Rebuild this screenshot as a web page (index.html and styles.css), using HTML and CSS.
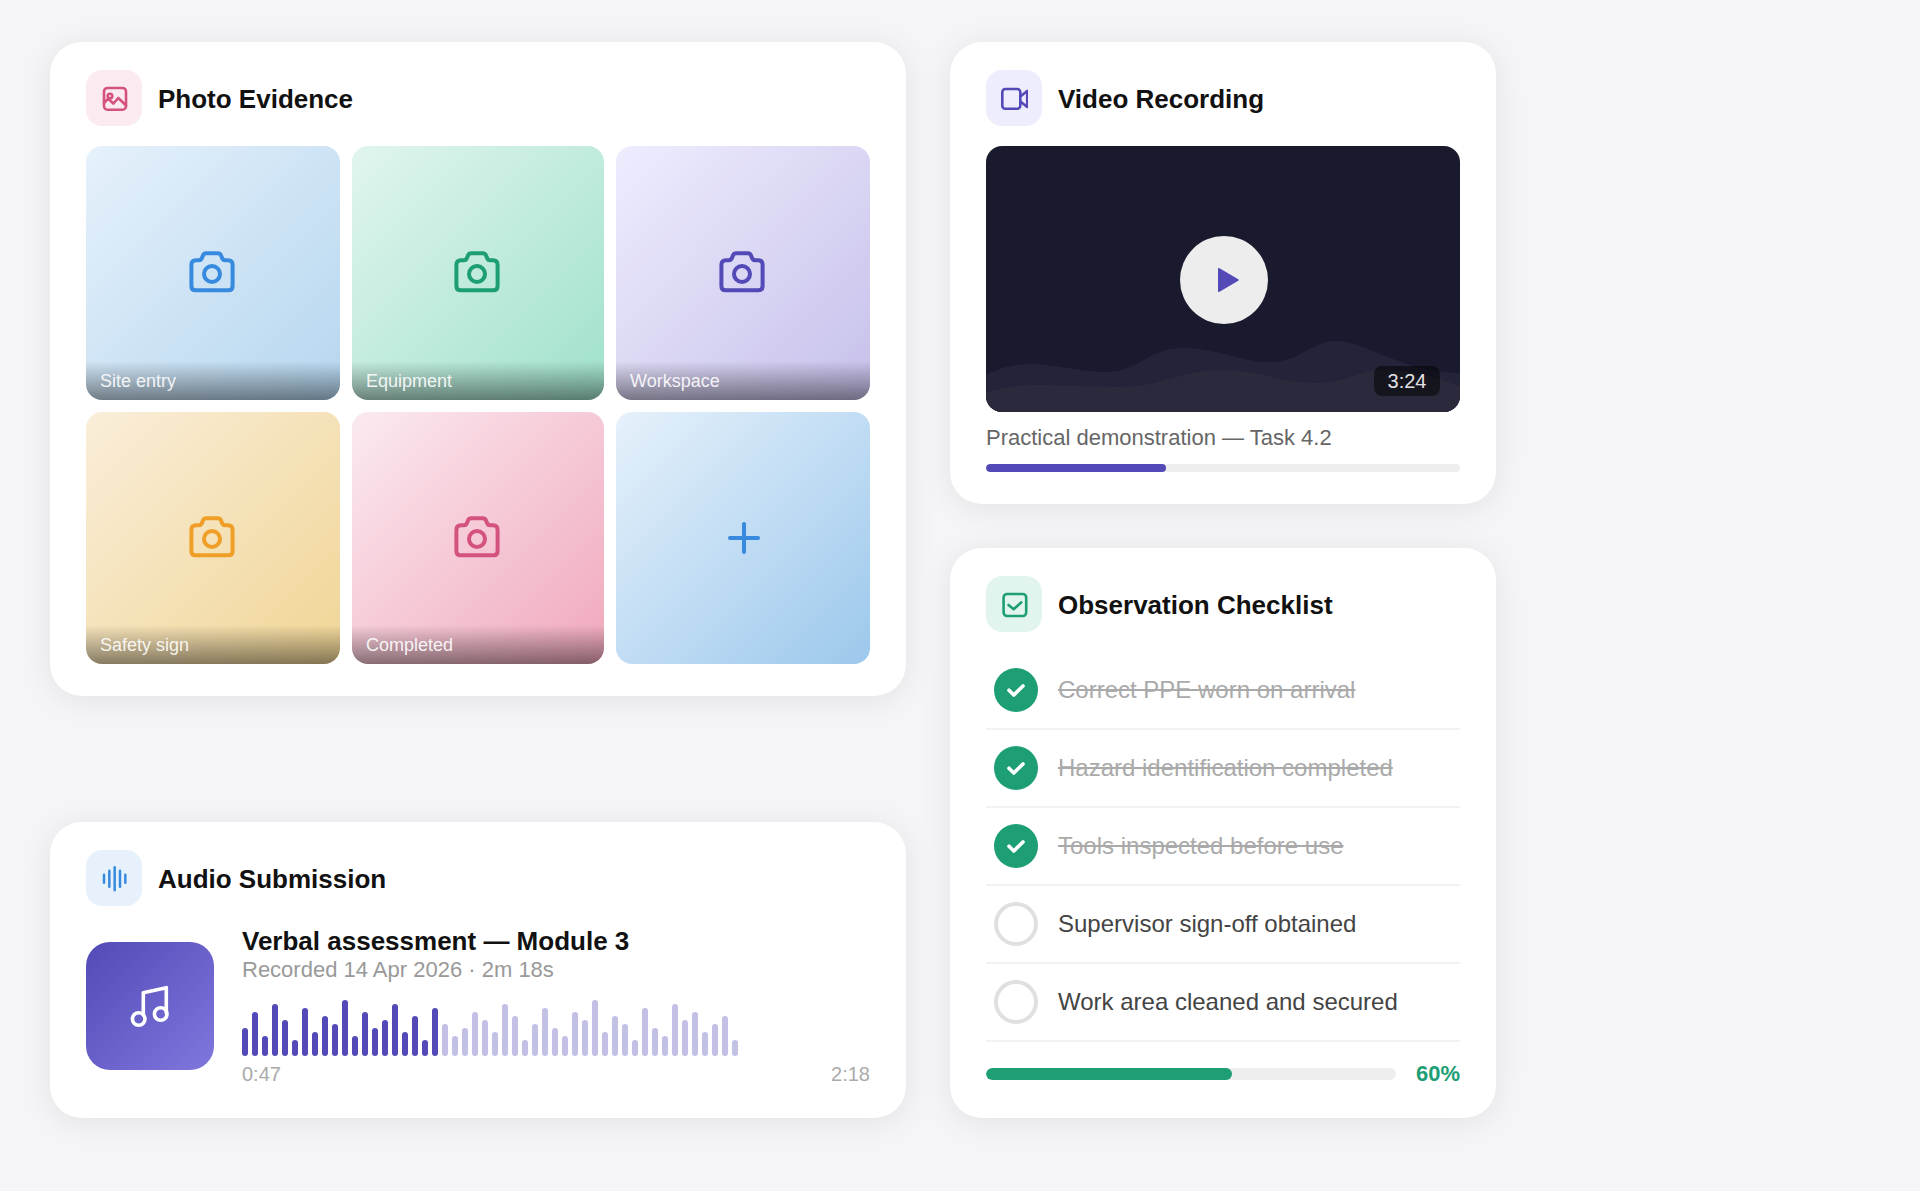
FILE: index.html
```html
<!doctype html>
<html>
<head>
  <title>Evidence</title>
  <link rel="stylesheet" href="styles.css">
</head>
<body>
<div class="board">

	<div class="col col-left">
		<section class="card">
			<div class="card-head">
				<div class="head-icon pink">
					<svg width="28" height="28" viewBox="0 0 28 28" fill="none" stroke="#D4537E" stroke-width="2.600" stroke-linecap="round" stroke-linejoin="round"><rect x="4" y="4" width="22" height="21.700" rx="3.500"/><circle cx="10" cy="12" r="2.300"/><path d="M4 19l4.300-4.500 5 5.100 5-5.600 7.700 7.500"/></svg>
				</div>
				<h2>Photo Evidence</h2>
			</div>
			<div class="photo-grid">
				<div class="tile tile-blue">
					<svg class="cam" viewBox="0 0 24 24" stroke="#378ADD"><path d="M1.200 8Q1.200 5.650 3.500 5.650H5Q5.900 5.650 6.300 4.900L7 3.200Q7.500 2.150 8.600 2.150H14.400Q15.500 2.150 16 3.200L16.700 4.900Q17.100 5.650 18 5.650H19.500Q21.800 5.650 21.800 8V18.500Q21.800 20.650 19.700 20.650H3.300Q1.200 20.650 1.200 18.500Z"/><circle cx="11.500" cy="12.500" r="4"/></svg>
					<div class="tile-label">Site entry</div>
				</div>
				<div class="tile tile-green">
					<svg class="cam" viewBox="0 0 24 24" stroke="#1D9E75"><path d="M1.200 8Q1.200 5.650 3.500 5.650H5Q5.900 5.650 6.300 4.900L7 3.200Q7.500 2.150 8.600 2.150H14.400Q15.500 2.150 16 3.200L16.700 4.900Q17.100 5.650 18 5.650H19.500Q21.800 5.650 21.800 8V18.500Q21.800 20.650 19.700 20.650H3.300Q1.200 20.650 1.200 18.500Z"/><circle cx="11.500" cy="12.500" r="4"/></svg>
					<div class="tile-label">Equipment</div>
				</div>
				<div class="tile tile-purple">
					<svg class="cam" viewBox="0 0 24 24" stroke="#534AB7"><path d="M1.200 8Q1.200 5.650 3.500 5.650H5Q5.900 5.650 6.300 4.900L7 3.200Q7.500 2.150 8.600 2.150H14.400Q15.500 2.150 16 3.200L16.700 4.900Q17.100 5.650 18 5.650H19.500Q21.800 5.650 21.800 8V18.500Q21.800 20.650 19.700 20.650H3.300Q1.200 20.650 1.200 18.500Z"/><circle cx="11.500" cy="12.500" r="4"/></svg>
					<div class="tile-label">Workspace</div>
				</div>
				<div class="tile tile-amber">
					<svg class="cam" viewBox="0 0 24 24" stroke="#EF9F27"><path d="M1.200 8Q1.200 5.650 3.500 5.650H5Q5.900 5.650 6.300 4.900L7 3.200Q7.500 2.150 8.600 2.150H14.400Q15.500 2.150 16 3.200L16.700 4.900Q17.100 5.650 18 5.650H19.500Q21.800 5.650 21.800 8V18.500Q21.800 20.650 19.700 20.650H3.300Q1.200 20.650 1.200 18.500Z"/><circle cx="11.500" cy="12.500" r="4"/></svg>
					<div class="tile-label">Safety sign</div>
				</div>
				<div class="tile tile-pink">
					<svg class="cam" viewBox="0 0 24 24" stroke="#D4537E"><path d="M1.200 8Q1.200 5.650 3.500 5.650H5Q5.900 5.650 6.300 4.900L7 3.200Q7.500 2.150 8.600 2.150H14.400Q15.500 2.150 16 3.200L16.700 4.900Q17.100 5.650 18 5.650H19.500Q21.800 5.650 21.800 8V18.500Q21.800 20.650 19.700 20.650H3.300Q1.200 20.650 1.200 18.500Z"/><circle cx="11.500" cy="12.500" r="4"/></svg>
					<div class="tile-label">Completed</div>
				</div>
				<div class="tile tile-add">
					<svg class="cam" viewBox="0 0 24 24" stroke="#378ADD"><path d="M12.500 5v14M5.500 12h14"/></svg>
				</div>
			</div>
		</section>

		<section class="card">
			<div class="card-head">
				<div class="head-icon blue">
					<svg width="28" height="28" viewBox="0 0 28 28" fill="none" stroke="#378ADD" stroke-width="2.500" stroke-linecap="round"><path d="M4 10.700v8M9.330 6.700v16M14.670 3.200v23M20 6.700v16M25.330 10.700v8"/></svg>
				</div>
				<h2>Audio Submission</h2>
			</div>
			<div class="audio-body">
				<div class="audio-art">
					<svg width="48" height="48" viewBox="0 0 48 48" fill="none" stroke="#fff" stroke-width="3.600" stroke-linecap="round" stroke-linejoin="round"><path d="M17.300 33V10.700L40.300 5.700V31"/><circle cx="12.700" cy="37" r="6.300"/><circle cx="34.700" cy="32" r="6.300"/></svg>
				</div>
				<div class="audio-info">
					<div class="audio-title">Verbal assessment — Module 3</div>
					<div class="audio-sub">Recorded 14 Apr 2026 · 2m 18s</div>
					<div class="wave">
						<span class="on" style="height:28px"></span><span class="on" style="height:44px"></span><span class="on" style="height:20px"></span><span class="on" style="height:52px"></span><span class="on" style="height:36px"></span>
						<span class="on" style="height:16px"></span><span class="on" style="height:48px"></span><span class="on" style="height:24px"></span><span class="on" style="height:40px"></span><span class="on" style="height:32px"></span>
						<span class="on" style="height:56px"></span><span class="on" style="height:20px"></span><span class="on" style="height:44px"></span><span class="on" style="height:28px"></span><span class="on" style="height:36px"></span>
						<span class="on" style="height:52px"></span><span class="on" style="height:24px"></span><span class="on" style="height:40px"></span><span class="on" style="height:16px"></span><span class="on" style="height:48px"></span>
						<span style="height:32px"></span><span style="height:20px"></span><span style="height:28px"></span><span style="height:44px"></span><span style="height:36px"></span>
						<span style="height:24px"></span><span style="height:52px"></span><span style="height:40px"></span><span style="height:16px"></span><span style="height:32px"></span>
						<span style="height:48px"></span><span style="height:28px"></span><span style="height:20px"></span><span style="height:44px"></span><span style="height:36px"></span>
						<span style="height:56px"></span><span style="height:24px"></span><span style="height:40px"></span><span style="height:32px"></span><span style="height:16px"></span>
						<span style="height:48px"></span><span style="height:28px"></span><span style="height:20px"></span><span style="height:52px"></span><span style="height:36px"></span>
						<span style="height:44px"></span><span style="height:24px"></span><span style="height:32px"></span><span style="height:40px"></span><span style="height:16px"></span>
					</div>
					<div class="audio-times"><span>0:47</span><span>2:18</span></div>
				</div>
			</div>
		</section>
	</div>

	<div class="col col-right">
		<section class="card">
			<div class="card-head">
				<div class="head-icon purple">
					<svg width="28" height="28" viewBox="0 0 28 28" fill="none" stroke="#534AB7" stroke-width="2.600" stroke-linecap="round" stroke-linejoin="round"><rect x="2.300" y="5" width="18" height="19.700" rx="3"/><path d="M21 12l6.200-5V23L21 18"/></svg>
				</div>
				<h2>Video Recording</h2>
			</div>
			<div class="video">
				<svg class="video-waves" viewBox="0 0 474 266" preserveAspectRatio="none">
					<path fill="#23233A" d="M0 229C15 221 30 218 43 218C70 218 95 226 119 226C155 226 160 202 198 202C230 202 255 216 284 216C315 216 325 195 350 195C380 195 415 226 474 227V266H0Z"/>
					<path fill="#2A2A3C" d="M0 247C15 242 30 239 50 239C85 239 105 241 136 241C175 241 195 224 236 224C275 224 295 237 329 237C360 237 375 224 394 224C425 224 450 230 474 241V266H0Z"/>
				</svg>
				<div class="play">
					<svg width="24" height="28" viewBox="0 0 24 28"><path fill="#534AB7" d="M2 3c0-.8.9-1.300 1.500-.8l18.800 11c.6.400.6 1.200 0 1.600L3.500 25.800c-.6.500-1.500 0-1.500-.8z"/></svg>
				</div>
				<div class="duration">3:24</div>
			</div>
			<div class="video-caption">Practical demonstration — Task 4.2</div>
			<div class="bar bar-thin"><div class="bar-fill fill-purple" style="width:38%"></div></div>
		</section>

		<section class="card">
			<div class="card-head">
				<div class="head-icon green">
					<svg width="28" height="28" viewBox="0 0 28 28" fill="none" stroke="#1D9E75" stroke-width="2.600" stroke-linecap="round" stroke-linejoin="round"><rect x="3.600" y="4" width="22.600" height="22" rx="3.500"/><path d="M8.500 15l5.200 4.300 7.600-7"/></svg>
				</div>
				<h2>Observation Checklist</h2>
			</div>
			<div class="check-list">
				<div class="check-row done">
					<div class="check-dot"><svg width="24" height="24" viewBox="0 0 24 24"><path d="M5 12.200l4.800 4.800L19 8"/></svg></div>
					<div class="check-text">Correct PPE worn on arrival</div>
				</div>
				<div class="check-row done">
					<div class="check-dot"><svg width="24" height="24" viewBox="0 0 24 24"><path d="M5 12.200l4.800 4.800L19 8"/></svg></div>
					<div class="check-text">Hazard identification completed</div>
				</div>
				<div class="check-row done">
					<div class="check-dot"><svg width="24" height="24" viewBox="0 0 24 24"><path d="M5 12.200l4.800 4.800L19 8"/></svg></div>
					<div class="check-text">Tools inspected before use</div>
				</div>
				<div class="check-row">
					<div class="check-dot"></div>
					<div class="check-text">Supervisor sign-off obtained</div>
				</div>
				<div class="check-row">
					<div class="check-dot"></div>
					<div class="check-text">Work area cleaned and secured</div>
				</div>
			</div>
			<div class="check-foot">
				<div class="bar bar-thick"><div class="bar-fill fill-green" style="width:60%"></div></div>
				<div class="check-pct">60%</div>
			</div>
		</section>
	</div>

</div>
</body>
</html>
```

FILE: styles.css
```css
html, body {height: 100%}
body {
	margin: 0;
	padding: 0;
	background: #f5f5f7;
	font-family: "Liberation Sans", Arial, sans-serif;
	color: #111;
}

.board {
	display: flex;
	gap: 44px;
	padding: 42px 50px;
	box-sizing: border-box;
	width: 1920px;
}
.col {
	display: flex;
	flex-direction: column;
}
.col-left {
	width: 856px;
	justify-content: space-between;
}
.col-right {
	width: 546px;
	gap: 44px;
}

.card {
	background: #fff;
	border-radius: 32px;
	padding: 28px 36px 32px;
	box-shadow: 0 4px 32px rgba(0, 0, 0, 0.08);
}
.card-head {
	display: flex;
	align-items: center;
	gap: 16px;
	margin-bottom: 20px;
}
.card-head h2 {
	margin: 0;
	padding-top: 2px;
	font-size: 26px;
	line-height: 32px;
	font-weight: 700;
}
.head-icon {
	width: 56px;
	height: 56px;
	border-radius: 16px;
	display: flex;
	align-items: center;
	justify-content: center;
}
.pink {background: #FBEAF0}
.blue {background: #E6F1FB}
.purple {background: #EEEDFE}
.green {background: #E1F5EE}

/* photos */
.photo-grid {
	display: grid;
	grid-template-columns: 254px 252px 254px;
	grid-template-rows: 254px 252px;
	gap: 12px;
}
.tile {
	position: relative;
	border-radius: 16px;
	overflow: hidden;
	display: flex;
	align-items: center;
	justify-content: center;
}
.tile-blue {background: linear-gradient(135deg, #E6F1FB, #B5D6EF)}
.tile-green {background: linear-gradient(135deg, #E1F5EE, #9FE1CB)}
.tile-purple {background: linear-gradient(135deg, #EEEDFE, #C6C0EA)}
.tile-amber {background: linear-gradient(135deg, #FAEEDA, #F0D595)}
.tile-pink {background: linear-gradient(135deg, #FBEAF0, #F0A8BC)}
.tile-add {background: linear-gradient(135deg, #E6F1FB, #9CC8EC)}
.cam {
	width: 48px;
	height: 48px;
	fill: none;
	stroke-width: 2;
	stroke-linecap: round;
	stroke-linejoin: round;
}
.tile-label {
	position: absolute;
	left: 0;
	right: 0;
	bottom: 0;
	height: 39px;
	padding: 8px 14px 0;
	box-sizing: border-box;
	font-size: 18px;
	line-height: 24px;
	color: rgba(255, 255, 255, 0.9);
	background: linear-gradient(transparent, rgba(0, 0, 0, 0.45));
}

/* audio */
.audio-body {
	display: flex;
	align-items: center;
	gap: 28px;
}
.audio-art {
	width: 128px;
	height: 128px;
	flex: none;
	border-radius: 24px;
	background: linear-gradient(135deg, #534AB7, #7F77DD);
	display: flex;
	align-items: center;
	justify-content: center;
}
.audio-info {
	flex: 1;
}
.audio-title {
	font-size: 26px;
	line-height: 30px;
	font-weight: 700;
}
.audio-sub {
	font-size: 22px;
	line-height: 28px;
	color: #999;
}
.wave {
	display: flex;
	align-items: flex-end;
	gap: 4px;
	height: 56px;
	margin-top: 16px;
}
.wave span {
	width: 6px;
	border-radius: 3px;
	background: #534AB7;
	opacity: 0.35;
}
.wave span.on {opacity: 1}
.audio-times {
	display: flex;
	justify-content: space-between;
	margin-top: 6px;
	font-size: 20px;
	line-height: 24px;
	color: #aaa;
}

/* video */
.video {
	position: relative;
	height: 266px;
	border-radius: 16px;
	overflow: hidden;
	background: #1A1A2E;
	display: flex;
	align-items: center;
	justify-content: center;
}
.video-waves {
	position: absolute;
	left: 0;
	top: 0;
	width: 100%;
	height: 100%;
}
.play {
	position: relative;
	width: 88px;
	height: 88px;
	margin: 2px 0 0 2px;
	border-radius: 50%;
	background: rgba(255, 255, 255, 0.92);
	display: flex;
	align-items: center;
	justify-content: center;
	padding-left: 8px;
	box-sizing: border-box;
}
.duration {
	position: absolute;
	right: 20px;
	bottom: 16px;
	width: 66px;
	height: 30px;
	border-radius: 8px;
	background: rgba(0, 0, 0, 0.5);
	color: rgba(255, 255, 255, 0.9);
	font-size: 20px;
	line-height: 30px;
	text-align: center;
}
.video-caption {
	margin: 12px 0;
	font-size: 22px;
	line-height: 28px;
	color: #666;
}
.bar {
	background: #eee;
	overflow: hidden;
}
.bar-thin {height: 8px; border-radius: 4px}
.bar-thick {height: 12px; border-radius: 6px; flex: 1}
.bar-fill {height: 100%; border-radius: inherit}
.fill-purple {background: #534AB7}
.fill-green {background: #1D9E75}

/* checklist */
.check-row {
	display: flex;
	align-items: center;
	gap: 20px;
	padding: 16px 0 16px 8px;
	border-bottom: 2px solid #f1f1f1;
}
.check-dot {
	width: 44px;
	height: 44px;
	flex: none;
	box-sizing: border-box;
	border-radius: 50%;
	border: 4px solid #e0e0e0;
}
.done .check-dot {
	border: none;
	background: #1D9E75;
	display: flex;
	align-items: center;
	justify-content: center;
}
.check-dot svg {
	fill: none;
	stroke: #fff;
	stroke-width: 3.6;
	stroke-linecap: round;
	stroke-linejoin: round;
}
.check-text {
	font-size: 24px;
	line-height: 32px;
	color: #444;
}
.done .check-text {
	color: #aaa;
	text-decoration: line-through;
}
.check-foot {
	display: flex;
	align-items: center;
	gap: 20px;
	margin-top: 20px;
}
.check-pct {
	font-size: 22px;
	line-height: 24px;
	font-weight: 700;
	color: #1D9E75;
}
```
